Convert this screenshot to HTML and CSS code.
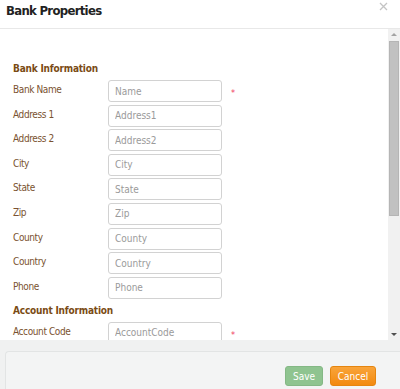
FILE: index.html
```html
<!DOCTYPE html>
<html>
<head>
<meta charset="utf-8">
<link rel="stylesheet" href="styles.css">
</head>
<body>
<div class="modal">
  <div class="header">
    <h1 class="title">Bank Properties</h1>
    <svg class="close" width="9" height="9" viewBox="0 0 9 9"><path d="M1 1L8 8M8 1L1 8" stroke="#c4c4c4" stroke-width="1.3"/></svg>
  </div>
  <div class="body">
    <div class="content">
      <h2 class="section">Bank Information</h2>
      <div class="rows">
        <div class="row"><label>Bank Name</label><input class="field" placeholder="Name"><span class="req">*</span></div>
        <div class="row"><label>Address 1</label><input class="field" placeholder="Address1"></div>
        <div class="row"><label>Address 2</label><input class="field" placeholder="Address2"></div>
        <div class="row"><label>City</label><input class="field" placeholder="City"></div>
        <div class="row"><label>State</label><input class="field" placeholder="State"></div>
        <div class="row"><label>Zip</label><input class="field" placeholder="Zip"></div>
        <div class="row"><label>County</label><input class="field" placeholder="County"></div>
        <div class="row"><label>Country</label><input class="field" placeholder="Country"></div>
        <div class="row"><label>Phone</label><input class="field" placeholder="Phone"></div>
      </div>
      <h2 class="section section2">Account Information</h2>
      <div class="rows">
        <div class="row"><label>Account Code</label><input class="field" placeholder="AccountCode"><span class="req">*</span></div>
      </div>
    </div>
    <div class="scrollbar">
      <div class="arrow up"></div>
      <div class="track"><div class="thumb"></div></div>
      <div class="arrow down"></div>
    </div>
  </div>
  <div class="footer">
    <div class="footer-inner">
      <button class="btn save">Save</button>
      <button class="btn cancel">Cancel</button>
    </div>
  </div>
</div>
</body>
</html>
```
FILE: styles.css
```css
html, body {
  margin: 0;
  padding: 0;
  background: #fff;
}
body {
  font-family: "DejaVu Sans Condensed", "DejaVu Sans", Verdana, sans-serif;
  font-size: 10px;
}
.modal {
  width: 400px;
  height: 389px;
  display: flex;
  flex-direction: column;
  overflow: hidden;
}
.header {
  height: 28px;
  border-bottom: 1px solid #e8e8e8;
  display: flex;
  justify-content: space-between;
  align-items: flex-start;
  padding: 0 12px 0 6px;
  flex: none;
}
.title {
  margin: 3px 0 0 0;
  font-size: 13px;
  font-weight: bold;
  letter-spacing: -0.7px;
  color: #222;
}
.close {
  margin-top: 2px;
  display: block;
}
.body {
  flex: none;
  height: 311px;
  display: flex;
}
.content {
  flex: 1;
  overflow: hidden;
  padding: 33px 0 0 13px;
}
.section {
  margin: 0;
  font-size: 10px;
  font-weight: bold;
  letter-spacing: -0.2px;
  color: #7a4b14;
  line-height: 13px;
}
.section2 {
  margin-top: 5px;
}
.rows {
  display: flex;
  flex-direction: column;
  gap: 2.6px;
  margin-top: 5px;
}
.row {
  display: flex;
  align-items: flex-start;
  height: 22px;
}
.row label {
  width: 95px;
  flex: none;
  color: #7a5230;
  padding-top: 3px;
  letter-spacing: -0.4px;
  line-height: 13px;
}
.field {
  box-sizing: border-box;
  width: 114px;
  height: 22px;
  border: 1px solid #d2d2d2;
  border-radius: 3px;
  padding: 0 0 0 6px;
  font-family: inherit;
  font-size: 10px;
  margin: 0;
  outline: none;
}
.field::placeholder {
  color: #9a9a9a;
}
.req {
  color: #f03c5e;
  margin-left: 9px;
  margin-top: 9px;
  font-size: 9px;
  line-height: 9px;
}
.scrollbar {
  width: 12px;
  background: #f1f1f1;
  display: flex;
  flex-direction: column;
  flex: none;
}
.arrow {
  height: 12px;
  position: relative;
}
.arrow::after {
  content: "";
  position: absolute;
  left: 3px;
  border-left: 3px solid transparent;
  border-right: 3px solid transparent;
}
.up::after {
  top: 4px;
  border-bottom: 3px solid #a3a3a3;
}
.down::after {
  top: 5px;
  border-top: 3px solid #505050;
}
.track {
  flex: 1;
  padding: 0 1px;
}
.thumb {
  height: 175px;
  background: #c1c1c1;
  border: 1px solid #b5b5b5;
  box-sizing: border-box;
}
.footer {
  flex: 1;
  background: #f0f1f1;
  padding: 11px 0 0 5px;
}
.footer-inner {
  height: 100%;
  box-sizing: border-box;
  border: 1px solid #e2e4e4;
  border-right: none;
  border-bottom: none;
  border-radius: 4px 0 0 0;
  background: #f3f4f4;
  display: flex;
  justify-content: flex-end;
  align-items: flex-start;
  gap: 7px;
  padding: 14px 24px 0 0;
}
.btn {
  font-family: inherit;
  font-size: 10px;
  color: #fff;
  height: 20px;
  border-radius: 3px;
  padding: 0;
  cursor: pointer;
}
.save {
  width: 38px;
  background: #8fc490;
  border: 1px solid #84b885;
}
.cancel {
  width: 46px;
  background: linear-gradient(#f9a43a, #f38a0f);
  border: 1px solid #e5850f;
}
```
